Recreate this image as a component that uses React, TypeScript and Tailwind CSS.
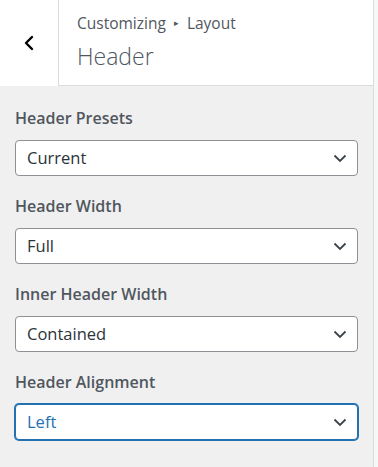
import { ChevronLeft } from "lucide-react";

type Field = { label: string; value: string; focused?: boolean };

const fields: Field[] = [
  { label: "Header Presets", value: "Current" },
  { label: "Header Width", value: "Full" },
  { label: "Inner Header Width", value: "Contained" },
  { label: "Header Alignment", value: "Left", focused: true },
];

function SelectChevron() {
  return (
    <svg width="14" height="9" viewBox="0 0 14 9" fill="none" className="shrink-0">
      <path d="M1.5 1.5 L7 7 L12.5 1.5" stroke="#3c434a" strokeWidth="1.8" />
    </svg>
  );
}

function FieldSelect({ label, value, focused }: Field) {
  return (
    <div className="flex flex-col">
      <label className="h-6 text-[16px] leading-6 font-semibold text-[#50575e]">{label}</label>
      <div
        className={
          focused
            ? "mt-[10px] h-9 flex items-center justify-between pl-[11px] pr-[10px] rounded-[4px] border border-[#2271b1] shadow-[0_0_0_1px_#2271b1] bg-white text-[#2271b1]"
            : "mt-[10px] h-9 flex items-center justify-between pl-[11px] pr-[10px] rounded-[4px] border border-[#8c8f94] bg-white text-[#2c3338]"
        }
      >
        <span className="text-[16.5px]">{value}</span>
        <SelectChevron />
      </div>
    </div>
  );
}

export default function App() {
  return (
    <div
      className="w-[378px] h-[467px] flex bg-[#f6f7f7] overflow-hidden"
      style={{ fontFamily: '"Open Sans", "Noto Sans", sans-serif' }}
    >
      <div className="w-[374px] flex flex-col bg-[#f0f0f1] border-r border-[#dcdcde]">
        {/* Header */}
        <div className="flex h-[86px] shrink-0">
          <button className="w-[59px] h-[86px] bg-white border-r border-[#dcdcde] flex items-center justify-center">
            <ChevronLeft size={24} strokeWidth={2.4} className="text-black -ml-[1px]" />
          </button>
          <div className="flex-1 h-[86px] bg-white border-b border-[#dcdcde] pl-[18px] pt-[13px]">
            <div className="text-[15.5px] leading-5 text-[#50575e] flex items-center gap-[8px]">
              <span>Customizing</span>
              <span className="text-[9px]">▸</span>
              <span>Layout</span>
            </div>
            <h1 className="mt-[7px] text-[23px] leading-8 font-light text-[#50575e]">Header</h1>
          </div>
        </div>

        {/* Controls */}
        <div className="flex flex-col gap-[18px] pt-5 pl-[15px] pr-[15px]">
          {fields.map((f) => (
            <FieldSelect key={f.label} {...f} />
          ))}
        </div>
      </div>
    </div>
  );
}
